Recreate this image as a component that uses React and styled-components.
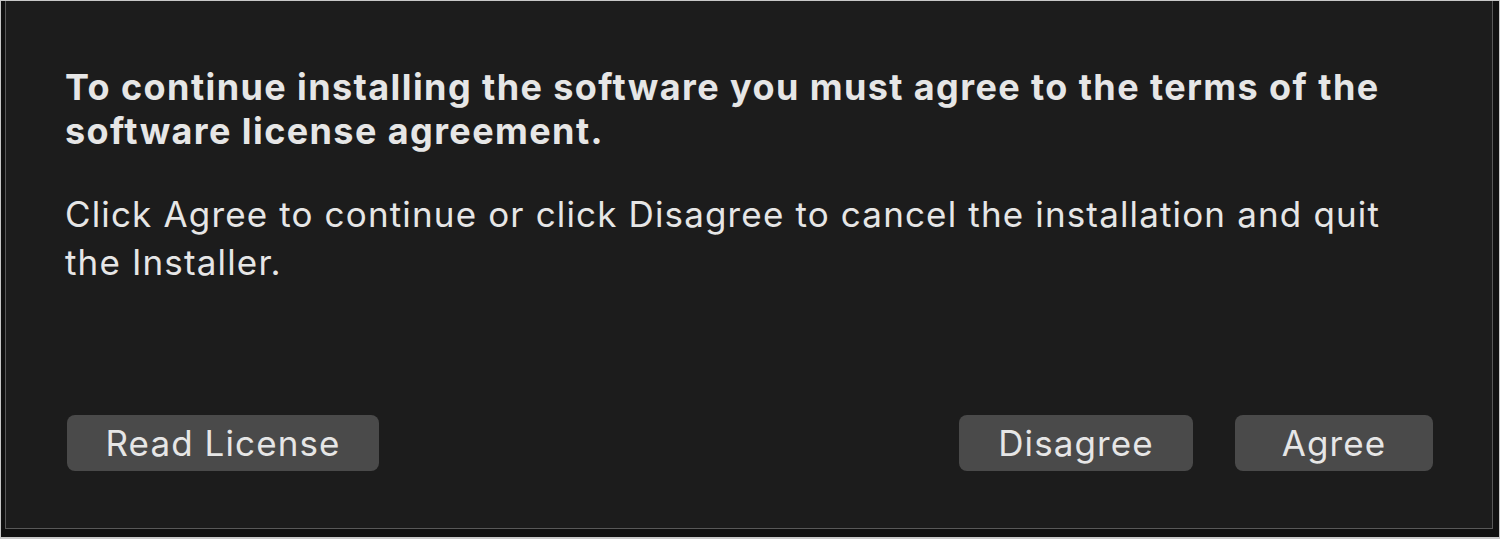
import React from "react";
import styled, { createGlobalStyle } from "styled-components";

const GlobalStyle = createGlobalStyle`
  html, body { margin: 0; padding: 0; background: #cfcfcf; }
  body { font-family: Inter, "Noto Sans", "Liberation Sans", sans-serif; -webkit-font-smoothing: antialiased; }
  * { box-sizing: border-box; }
`;

const Frame = styled.div`
  width: 1500px;
  height: 539px;
  border: 1px solid #c8c8c8;
  border-bottom-width: 2px;
  background: #101010;
  padding: 0 6px 8px 4px;
  display: flex;
`;

const Panel = styled.div`
  flex: 1;
  background: #1c1c1c;
  border: 1px solid #585858;
  border-top: none;
  padding: 64px 59px 57px 59px;
  display: flex;
  flex-direction: column;
`;

const Heading = styled.h1`
  margin: 0;
  max-width: 1360px;
  font-size: 36px;
  line-height: 44px;
  letter-spacing: 1.4px;
  font-weight: 700;
  color: #e6e6e6;
`;

const Message = styled.p`
  margin: 37px 0 0;
  max-width: 1360px;
  font-size: 35px;
  line-height: 48px;
  letter-spacing: 1.15px;
  font-weight: 400;
  color: #e6e6e6;
`;

const ButtonRow = styled.div`
  margin-top: auto;
  padding-left: 2px;
  display: flex;
  align-items: center;
  gap: 42px;
`;

const Spacer = styled.div`
  flex: 1;
`;

const Button = styled.button`
  width: ${(p) => p.$w}px;
  height: 56px;
  border: none;
  border-radius: 8px;
  background: #4a4a4a;
  color: #e6e6e6;
  font-family: inherit;
  font-size: 35px;
  letter-spacing: 1.1px;
  font-weight: 400;
  padding: 0;
  display: flex;
  align-items: center;
  justify-content: center;
  cursor: default;
`;

export default function App() {
  return (
    <>
      <GlobalStyle />
      <Frame>
        <Panel>
          <Heading>
            To continue installing the software you must agree to the terms of the software license agreement.
          </Heading>
          <Message>
            Click Agree to continue or click Disagree to cancel the installation and quit the Installer.
          </Message>
          <ButtonRow>
            <Button $w={312}>Read License</Button>
            <Spacer />
            <Button $w={234}>Disagree</Button>
            <Button $w={198}>Agree</Button>
          </ButtonRow>
        </Panel>
      </Frame>
    </>
  );
}
